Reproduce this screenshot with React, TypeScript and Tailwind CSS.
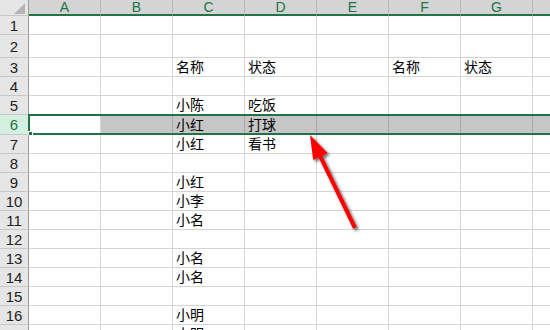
const COLS = ['A', 'B', 'C', 'D', 'E', 'F', 'G', 'H'];

type Row = { n: number; h: string; cells?: Record<string, string> };

const ROWS: Row[] = [
  { n: 1, h: 'h-[19px]' },
  { n: 2, h: 'h-[23px]' },
  { n: 3, h: 'h-[19px]', cells: { C: '名称', D: '状态', F: '名称', G: '状态' } },
  { n: 4, h: 'h-[19px]' },
  { n: 5, h: 'h-[19px]', cells: { C: '小陈', D: '吃饭' } },
  { n: 6, h: 'h-[20px]', cells: { C: '小红', D: '打球' } },
  { n: 7, h: 'h-[19px]', cells: { C: '小红', D: '看书' } },
  { n: 8, h: 'h-[19px]' },
  { n: 9, h: 'h-[19px]', cells: { C: '小红' } },
  { n: 10, h: 'h-[19px]', cells: { C: '小李' } },
  { n: 11, h: 'h-[19px]', cells: { C: '小名' } },
  { n: 12, h: 'h-[19px]' },
  { n: 13, h: 'h-[19px]', cells: { C: '小名' } },
  { n: 14, h: 'h-[19px]', cells: { C: '小名' } },
  { n: 15, h: 'h-[19px]' },
  { n: 16, h: 'h-[19px]', cells: { C: '小明' } },
  { n: 17, h: 'h-[19px]', cells: { C: '小明' } },
];

const cjk = "font-['Noto_Sans_CJK_SC','Noto_Sans',sans-serif]";
const latin = "font-['Liberation_Sans','DejaVu_Sans',sans-serif]";

function RedArrow() {
  return (
    <svg className="pointer-events-none absolute left-0 top-0" width={550} height={330}>
      <defs>
        <filter id="shadow" x="-50%" y="-50%" width="200%" height="200%">
          <feDropShadow dx="2" dy="2" stdDeviation="1.8" floodColor="#000" floodOpacity="0.6" />
        </filter>
      </defs>
      <polygon
        filter="url(#shadow)"
        fill="#ff0000"
        points="310,135 327.6,153.1 322.2,155.7 356.8,227.1 353.2,228.9 318.6,157.5 313.2,160.1"
      />
    </svg>
  );
}

export default function App() {
  return (
    <div className={`relative h-[330px] w-[550px] overflow-hidden bg-white ${latin}`}>
      {/* column headers */}
      <div className="flex h-[16px]">
        <div className="flex h-full w-[29px] shrink-0 items-end justify-end border-r border-b border-r-[#9b9b9b] border-b-[#c8c8c8] bg-[#e6e6e6] pr-[3px] pb-[1px]">
          <svg width="11" height="11" viewBox="0 0 11 11">
            <polygon points="11,0 11,11 0,11" fill="#b4b4b4" />
          </svg>
        </div>
        {COLS.map((c) => (
          <div
            key={c}
            className="flex h-full w-[72px] shrink-0 items-end justify-center border-r border-b-2 border-r-[#b8b8b8] border-b-[#217346] bg-[#d4d4d4] text-[14px] leading-[14px] text-[#217346]"
          >
            {c}
          </div>
        ))}
      </div>

      {ROWS.map((r) => {
        const sel = r.n === 6;
        return (
          <div key={r.n} className={`relative flex ${r.h}`}>
            <div
              className={`flex w-[29px] shrink-0 items-center justify-center border-r border-b border-r-[#9b9b9b] border-b-[#c8c8c8] text-[15px] leading-none ${
                sel ? 'bg-[#d3f0e0] text-[#217346]' : 'bg-[#e6e6e6] text-[#222]'
              }`}
            >
              {r.n}
            </div>
            {COLS.map((c) => {
              const txt = r.cells?.[c];
              const grey = sel && c !== 'A';
              return (
                <div
                  key={c}
                  className={`flex w-[72px] shrink-0 items-end border-r border-b pb-[1px] pl-[3px] text-[14px] leading-[17px] text-black ${cjk} ${
                    grey ? 'border-r-[#a8a8a8] border-b-white bg-[#c6c6c6]' : 'border-[#d4d4d4] bg-white'
                  }`}
                >
                  {txt}
                </div>
              );
            })}
            {sel && (
              <div className="pointer-events-none absolute -top-[1px] bottom-0 left-[28px] right-0 border-y-2 border-l-2 border-[#217346]">
                <div className="absolute -bottom-[3px] -left-[2px] h-[5px] w-[5px] border border-white bg-[#217346]" />
              </div>
            )}
          </div>
        );
      })}

      <RedArrow />
    </div>
  );
}
